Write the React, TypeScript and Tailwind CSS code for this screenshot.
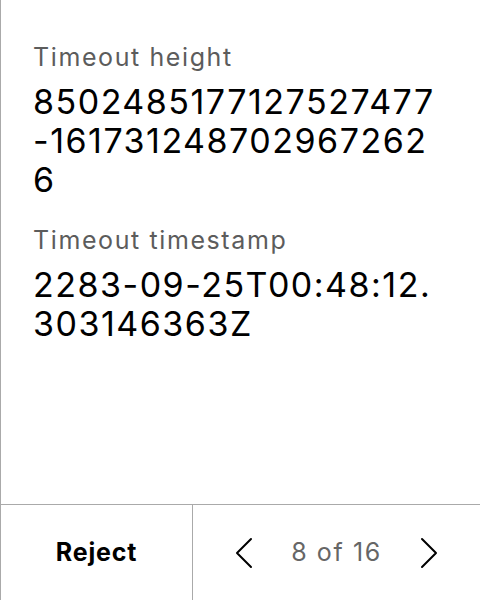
import React from 'react';

const items = [
  { label: 'Timeout height', value: '8502485177127527477-1617312487029672626' },
  { label: 'Timeout timestamp', value: '2283-09-25T00:48:12.303146363Z' },
];

const Chevron = ({ dir }: { dir: 'left' | 'right' }) => (
  <svg width="18" height="32" viewBox="0 0 18 32" fill="none" stroke="#000" strokeWidth="2" strokeLinecap="round" strokeLinejoin="round">
    {dir === 'left' ? <path d="M16 2 L2 16 L16 30" /> : <path d="M2 2 L16 16 L2 30" />}
  </svg>
);

const App: React.FC = () => {
  return (
    <div
      className="w-[480px] h-[600px] flex flex-col bg-white border-l border-[#aaa] text-black"
      style={{ fontFamily: 'Inter, "Noto Sans", sans-serif' }}
    >
      <div className="flex-1 pl-[32px] pr-[33px] pt-[41px] flex flex-col gap-[25px]">
        {items.map((it) => (
          <div key={it.label} className="flex flex-col gap-[9px]">
            <div className="text-[25px] leading-[32px] tracking-[1.6px] text-[#5c5c5c]">{it.label}</div>
            <div className="text-[34px] leading-[39px] tracking-[1.5px] break-all">{it.value}</div>
          </div>
        ))}
      </div>
      <div className="h-[96px] flex border-t border-[#aaa]">
        <button className="w-[192px] flex items-center justify-center text-[25px] tracking-[0.8px] font-bold border-r border-[#aaa]">
          Reject
        </button>
        <div className="flex-1 flex items-center justify-between px-[42px]">
          <Chevron dir="left" />
          <span className="text-[25px] tracking-[1.6px] text-[#666]">8 of 16</span>
          <Chevron dir="right" />
        </div>
      </div>
    </div>
  );
};

export default App;
